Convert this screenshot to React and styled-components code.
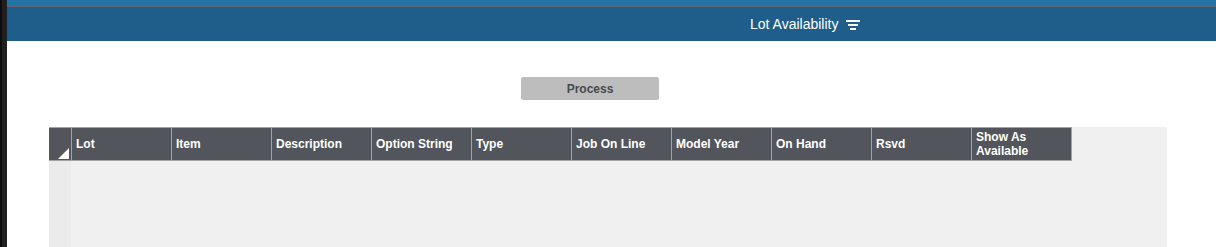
import React from 'react'
import styled, { createGlobalStyle } from 'styled-components'

const GlobalStyle = createGlobalStyle`
  html, body {
    margin: 0;
    padding: 0;
    background: #ffffff;
    font-family: "Liberation Sans", Arial, sans-serif;
    overflow: hidden;
  }
`

const columns = [
  { label: 'Lot' },
  { label: 'Item' },
  { label: 'Description' },
  { label: 'Option String' },
  { label: 'Type' },
  { label: 'Job On Line' },
  { label: 'Model Year' },
  { label: 'On Hand' },
  { label: 'Rsvd' },
  { label: 'Show As Available', last: true },
]

export default function App() {
  return (
    <Page>
      <GlobalStyle />
      <SideStrip />
      <Main>
        <TopStrip />
        <TitleBar>
          <Title>Lot Availability</Title>
          <FilterIcon width="14" height="10" viewBox="0 0 14 10">
            <rect x="0" y="0" width="14" height="2" fill="#fff" />
            <rect x="2" y="4" width="10" height="2" fill="#fff" />
            <rect x="4" y="8" width="6" height="2" fill="#fff" />
          </FilterIcon>
        </TitleBar>
        <Content>
          <ButtonRow>
            <ProcessButton>Process</ProcessButton>
          </ButtonRow>
          <Grid>
            <HeaderRow>
              <CornerCell>
                <Triangle />
              </CornerCell>
              {columns.map((c) => (
                <HeaderCell key={c.label} $last={c.last}>
                  {c.label}
                </HeaderCell>
              ))}
            </HeaderRow>
            <GridBody>
              <RowGutter />
            </GridBody>
          </Grid>
        </Content>
      </Main>
    </Page>
  )
}

const Page = styled.div`
  display: flex;
  width: 1216px;
  height: 247px;
  overflow: hidden;
`

const SideStrip = styled.div`
  width: 7px;
  flex: none;
  background: linear-gradient(to right, #0d0d0d 0 2px, #202020 2px);
`

const Main = styled.div`
  flex: 1;
  display: flex;
  flex-direction: column;
  min-width: 0;
`

const TopStrip = styled.div`
  height: 6px;
  background: #2474a7;
  border-bottom: 1px solid #5e6670;
`

const TitleBar = styled.div`
  height: 34px;
  background: #1f5d8a;
  display: flex;
  align-items: center;
  padding-left: 743px;
`

const Title = styled.span`
  color: #ffffff;
  font-size: 14px;
  line-height: 16px;
`

const FilterIcon = styled.svg`
  margin-left: 8px;
  margin-top: 1px;
`

const Content = styled.div`
  flex: 1;
  display: flex;
  flex-direction: column;
  padding-left: 42px;
`

const ButtonRow = styled.div`
  padding-top: 36px;
  padding-left: 472px;
  height: 23px;
  display: flex;
`

const ProcessButton = styled.button`
  width: 138px;
  height: 23px;
  border: none;
  border-radius: 2px;
  background: #bdbdbd;
  color: #444a50;
  font-family: "Liberation Sans", Arial, sans-serif;
  font-size: 12px;
  font-weight: bold;
  padding: 1px 0 0;
`

const Grid = styled.div`
  margin-top: 27px;
  width: 1118px;
  flex: 1;
  background: #f0f0f0;
  display: flex;
  flex-direction: column;
`

const HeaderRow = styled.div`
  display: flex;
  height: 34px;
`

const CornerCell = styled.div`
  width: 22px;
  flex: none;
  background: #52555c;
  border-top: 1px solid #a3a3a3;
  border-bottom: 1px solid #a3a3a3;
  position: relative;
`

const Triangle = styled.div`
  position: absolute;
  right: 2px;
  bottom: 1px;
  width: 0;
  height: 0;
  border-left: 11px solid transparent;
  border-bottom: 11px solid #ffffff;
`

const HeaderCell = styled.div`
  flex: none;
  width: ${(p) => (p.$last ? '101px' : '100px')};
  box-sizing: border-box;
  background: #52555c;
  border: 1px solid #a3a3a3;
  border-right: ${(p) => (p.$last ? '1px solid #a3a3a3' : 'none')};
  color: #ffffff;
  font-size: 12px;
  font-weight: bold;
  line-height: 14px;
  padding-left: 4px;
  display: flex;
  align-items: center;
`

const GridBody = styled.div`
  flex: 1;
  display: flex;
`

const RowGutter = styled.div`
  width: 22px;
  background: #ebebeb;
`
